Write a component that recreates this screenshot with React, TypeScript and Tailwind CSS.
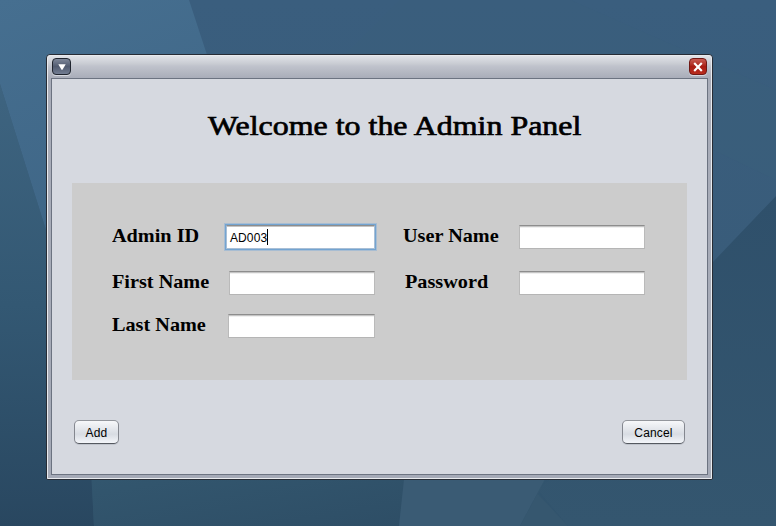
import type { ReactNode } from "react";

function Backdrop() {
  return (
    <svg className="absolute inset-0 h-full w-full" viewBox="0 0 776 526" preserveAspectRatio="none">
      <defs>
        <linearGradient id="base" x1="0" y1="0" x2="0" y2="1">
          <stop offset="0" stopColor="#3a5e7e" />
          <stop offset="0.5" stopColor="#395c7a" />
          <stop offset="1" stopColor="#31536c" />
        </linearGradient>
        <linearGradient id="corner" x1="0" y1="0" x2="0.3" y2="1">
          <stop offset="0" stopColor="#466f90" />
          <stop offset="1" stopColor="#3a6080" />
        </linearGradient>
        <linearGradient id="left" x1="0" y1="0" x2="0" y2="1">
          <stop offset="0" stopColor="#3e6480" />
          <stop offset="0.5" stopColor="#335873" />
          <stop offset="1" stopColor="#294760" />
        </linearGradient>
        <linearGradient id="foot" x1="0" y1="0" x2="1" y2="1">
          <stop offset="0" stopColor="#33576f" />
          <stop offset="1" stopColor="#2e4e66" />
        </linearGradient>
        <linearGradient id="right" x1="0" y1="0" x2="0" y2="1">
          <stop offset="0" stopColor="#2f506b" />
          <stop offset="1" stopColor="#34566f" />
        </linearGradient>
      </defs>
      <rect width="776" height="526" fill="url(#base)" />
      <polygon points="400,0 570,0 776,90 776,180 713,150 500,60 340,60" fill="#3a5f7a" opacity="0.3" />
      <polygon points="0,0 189,0 320,400 60,400 46,230 0,84" fill="url(#corner)" />
      <polygon points="0,84 46,230 92,480 94,526 0,526" fill="url(#left)" />
      <polygon points="91,470 406,470 399,526 94,526" fill="url(#foot)" />
      <polygon points="776,196 713,262 640,400 538,490 568,526 776,526" fill="url(#right)" />
      <polygon points="405,470 550,470 520,526 399,526" fill="#3a5b74" />
      <polygon points="550,470 538,494 568,526 520,526" fill="#36576f" />
    </svg>
  );
}

function Label({ className, children }: { className: string; children: ReactNode }) {
  return (
    <span className={`-mt-px block shrink-0 whitespace-nowrap ${className}`}>
      <span className="inline-block origin-left scale-x-[1.065] font-['Liberation_Serif',serif] text-[19px] leading-6 font-bold text-black">
        {children}
      </span>
    </span>
  );
}

function Field({ className }: { className: string }) {
  return (
    <div
      className={`h-6 shrink-0 border border-t-[#8d8d8d] border-r-[#bababa] border-b-[#b5b5b5] border-l-[#bababa] bg-white shadow-[inset_0_1px_0_#c4c4c4,inset_0_2px_0_#f0f0f0] ${className}`}
    />
  );
}

function PushButton({ className, children }: { className: string; children: ReactNode }) {
  return (
    <button
      className={`h-6 rounded-[5px] border border-[#84878f] border-t-[#93969c] border-b-[#555960] bg-linear-to-b from-[#f7f8fa] via-[#d8dce3] via-60% to-[#f4f6fa] pt-px text-center text-[12px] leading-[22px] tracking-[0.15px] text-black shadow-[0_1px_0_#c0c4cc] ${className}`}
    >
      {children}
    </button>
  );
}

export default function App() {
  return (
    <div className="relative h-[526px] w-[776px] overflow-hidden pt-[54px] pl-[46px] font-['Liberation_Sans',Arial,sans-serif]">
      <Backdrop />
      <div className="relative flex h-[426px] w-[667px] flex-col rounded-t-[4px] rounded-b-[2px] border border-[#272c35] bg-[#a5aab7]">
        <div className="flex h-full flex-col rounded-t-[3px] border border-[#e8eaee] px-[3px] pb-[3px] bg-[linear-gradient(to_bottom,#e0e2e7_0px,#c8cbd2_8px,#c0c3cc_10px,#a9adb9_22px,#a5aab7_100%)]">
          <header className="flex h-[22px] shrink-0 items-start justify-between pt-[2px]">
            <button className="ml-px flex h-[17px] w-[19px] items-center justify-center rounded-[4px] border border-[#20252f] bg-linear-to-b from-[#7e8799] via-[#515b70] to-[#727d92] shadow-[0_1px_0_#d5d8df]">
              <svg width="8" height="6" viewBox="0 0 8 6" className="block">
                <path d="M0.3 0.3h7.4L4.5 5.8h-1z" fill="#fff" />
              </svg>
            </button>
            <button className="mr-px flex h-[17px] w-[18px] items-center justify-center rounded-[4px] border border-[#701814] bg-linear-to-b from-[#c85a52] via-[#a91c13] to-[#b92c1e] shadow-[0_1px_0_#d5d8df]">
              <svg width="10" height="10" viewBox="0 0 10 10" className="block">
                <path d="M1.2 1l7.6 8M8.8 1L1.2 9" stroke="#fff" strokeWidth="2.1" />
              </svg>
            </button>
          </header>
          <main className="min-h-0 flex-1 border border-[#6c7381] bg-[#d6d9e0] px-5">
            <h1 className="mt-[31px] ml-[136px] h-8 w-max origin-left scale-x-[1.14] whitespace-nowrap font-['Liberation_Serif',serif] text-[28px] leading-8 font-normal text-black [-webkit-text-stroke:0.7px_#000]">
              Welcome to the Admin Panel
            </h1>
            <section className="mt-[41px] h-[197px] w-[615px] bg-[#cccccc] pt-[42px] pl-10">
              <div className="flex h-6">
                <Label className="w-[114px]">Admin ID</Label>
                <div className="flex h-6 w-[149px] shrink-0 items-center border border-[#a9bfd6] border-t-[#8d8d8d] bg-white pl-[3px] text-[12px] shadow-[0_0_0_1px_#73a4d1,0_0_0_2px_#a8bdd2,inset_0_1px_0_#c4c4c4]">
                  <span className="pt-px tracking-[0.1px]">AD003</span>
                  <span className="h-4 w-px bg-black" />
                </div>
                <Label className="ml-7 w-[116px]">User Name</Label>
                <Field className="w-[126px]" />
              </div>
              <div className="mt-[22px] flex h-6">
                <Label className="w-[117px]">First Name</Label>
                <Field className="w-[146px]" />
                <Label className="ml-[30px] w-[114px]">Password</Label>
                <Field className="w-[126px]" />
              </div>
              <div className="mt-[19px] flex h-6">
                <Label className="w-[116px]">Last Name</Label>
                <Field className="w-[147px]" />
              </div>
            </section>
            <footer className="mt-10 flex w-[613px] justify-between pl-0.5">
              <PushButton className="w-[45px]">Add</PushButton>
              <PushButton className="w-[63px]">Cancel</PushButton>
            </footer>
          </main>
        </div>
      </div>
    </div>
  );
}
